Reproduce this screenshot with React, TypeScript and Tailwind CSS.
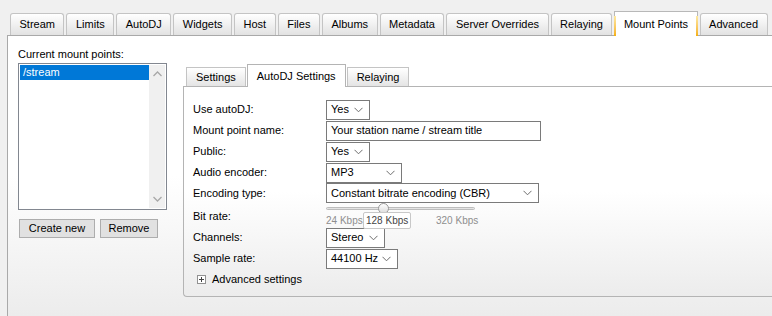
import React from "react";

const topTabs = [
  "Stream",
  "Limits",
  "AutoDJ",
  "Widgets",
  "Host",
  "Files",
  "Albums",
  "Metadata",
  "Server Overrides",
  "Relaying",
  "Mount Points",
  "Advanced",
];

const Chevron = () => (
  <svg width="9" height="6" viewBox="0 0 9 6" className="shrink-0">
    <path d="M0.5 0.8 L4.5 4.8 L8.5 0.8" fill="none" stroke="#6d6d6d" strokeWidth="1" />
  </svg>
);

const Select = ({ value, width }: { value: string; width: string }) => (
  <div
    className={`flex h-[20px] items-center justify-between whitespace-nowrap border border-[#7a7a7a] bg-white pl-[4px] pr-[6px] ${width}`}
  >
    <span>{value}</span>
    <Chevron />
  </div>
);

const Row = ({ label, children, h = "h-[21px]" }: { label: string; children: React.ReactNode; h?: string }) => (
  <div className={`flex items-center ${h}`}>
    <div className="w-[133px] shrink-0">{label}</div>
    {children}
  </div>
);

export default function App() {
  return (
    <div
      className="flex h-[316px] w-[772px] flex-col overflow-hidden whitespace-nowrap bg-[#f0f0f0] text-[11px] text-black"
      style={{ fontFamily: '"Liberation Sans", Arial, sans-serif' }}
    >
      {/* main tabs */}
      <div className="flex h-[35px] items-end gap-[2px] pl-[10px]">
        {topTabs.map((t) => {
          const active = t === "Mount Points";
          return active ? (
            <div
              key={t}
              className="relative z-10 -mb-px flex h-[25px] items-center border-x border-t border-[#b8b8b8] bg-white px-[8.5px]"
            >
              <span className="absolute bottom-0 left-[-1px] top-[4px] w-[2px] bg-gradient-to-b from-[#fde9a0] to-[#f5b000]" />
              <span className="absolute bottom-0 right-[-1px] top-[4px] w-[2px] bg-gradient-to-b from-[#fde9a0] to-[#f5b000]" />
              {t}
            </div>
          ) : (
            <div
              key={t}
              className="flex h-[22px] items-center rounded-t-[3px] border-x border-t border-[#c4c4c4] bg-gradient-to-b from-white to-[#e2e2e2] px-[8.5px]"
            >
              {t}
            </div>
          );
        })}
      </div>

      {/* outer panel */}
      <div className="ml-[7px] flex flex-1 gap-[16px] border-l border-t border-[#a9a9a9] bg-gradient-to-b from-white via-white to-[#ececec] pl-[10px] pt-[12px]">
        {/* left column */}
        <div className="flex w-[149px] shrink-0 flex-col">
          <div className="h-[15px] leading-[13px]">Current mount points:</div>
          <div className="flex h-[147px] border border-[#828790] bg-white p-px">
            <div className="flex-1">
              <div className="h-[15px] bg-[#0078d7] pl-[3px] leading-[15px] text-white">/stream</div>
            </div>
            <div className="flex w-[16px] flex-col items-center justify-between bg-[#f0f0f0] py-[6px]">
              <svg width="9" height="6" viewBox="0 0 9 6">
                <path d="M0.5 5 L4.5 1 L8.5 5" fill="none" stroke="#a8a8a8" strokeWidth="1.3" />
              </svg>
              <svg width="9" height="6" viewBox="0 0 9 6">
                <path d="M0.5 1 L4.5 5 L8.5 1" fill="none" stroke="#a8a8a8" strokeWidth="1.3" />
              </svg>
            </div>
          </div>
          <div className="mt-[9px] flex gap-[5px] pl-px">
            <button className="h-[19px] w-[76px] border border-[#adadad] bg-[#e1e1e1]">Create new</button>
            <button className="h-[19px] w-[58px] border border-[#adadad] bg-[#e1e1e1]">Remove</button>
          </div>
        </div>

        {/* right column */}
        <div className="flex flex-1 flex-col pt-[17px]">
          <div className="flex h-[21px] items-end gap-[1px] pl-[3px]">
            <div className="flex h-[19px] items-center border-x border-t border-[#c4c4c4] bg-gradient-to-b from-white to-[#e4e4e4] px-[9px]">
              Settings
            </div>
            <div className="relative z-10 -mb-px flex h-[23px] items-center border-x border-t border-[#b4b4b4] bg-white px-[9px]">
              AutoDJ Settings
            </div>
            <div className="flex h-[19px] items-center border-x border-t border-[#c4c4c4] bg-gradient-to-b from-white to-[#e4e4e4] px-[9px]">
              Relaying
            </div>
          </div>
          <div className="flex h-[211px] flex-col rounded-bl-[4px] border-b border-l border-t border-[#b4b4b4] bg-gradient-to-b from-white via-white to-[#ececec] pl-[9px] pt-[12px]">
            <Row label="Use autoDJ:">
              <Select value="Yes" width="w-[44px]" />
            </Row>
            <Row label="Mount point name:">
              <div className="flex h-[20px] w-[215px] items-center border border-[#7a7a7a] bg-white pl-[4px]">
                Your station name / stream title
              </div>
            </Row>
            <Row label="Public:">
              <Select value="Yes" width="w-[44px]" />
            </Row>
            <Row label="Audio encoder:">
              <Select value="MP3" width="w-[76px]" />
            </Row>
            <Row label="Encoding type:" h="h-[20px]">
              <Select value="Constant bitrate encoding (CBR)" width="w-[213px]" />
            </Row>
            <div className="flex h-[24px]">
              <div className="flex w-[133px] shrink-0 items-center pt-[2px]">Bit rate:</div>
              <div className="relative w-[200px]">
                <div className="absolute left-0 top-[4px] h-[3px] w-[149px] rounded-full border border-[#bdbdbd] bg-[#e4e4e4]" />
                <div className="absolute left-[52px] top-0 h-[11px] w-[11px] rounded-full border border-[#9a9a9a] bg-gradient-to-b from-white to-[#dcdcdc]" />
                <div className="absolute left-0 top-[12px] text-[10px] leading-[12px] text-[#8e8e8e]">24 Kbps</div>
                <div className="absolute left-[110px] top-[12px] text-[10px] leading-[12px] text-[#8e8e8e]">320 Kbps</div>
                <div className="absolute left-[37px] top-[9px] z-10 rounded-[2px] border border-[#c8c8c8] bg-white px-[2px] text-[10px] leading-[15px] text-[#444]">
                  128 Kbps
                </div>
              </div>
            </div>
            <Row label="Channels:">
              <Select value="Stereo" width="w-[59px]" />
            </Row>
            <Row label="Sample rate:">
              <Select value="44100 Hz" width="w-[72px]" />
            </Row>
            <div className="mt-[2px] flex items-center gap-[6px] pl-[4px]">
              <svg width="9" height="9" viewBox="0 0 9 9">
                <rect x="0.5" y="0.5" width="8" height="8" fill="#fff" stroke="#919191" />
                <path d="M2 4.5 H7 M4.5 2 V7" stroke="#444" strokeWidth="1" />
              </svg>
              <span>Advanced settings</span>
            </div>
          </div>
        </div>
      </div>
    </div>
  );
}
